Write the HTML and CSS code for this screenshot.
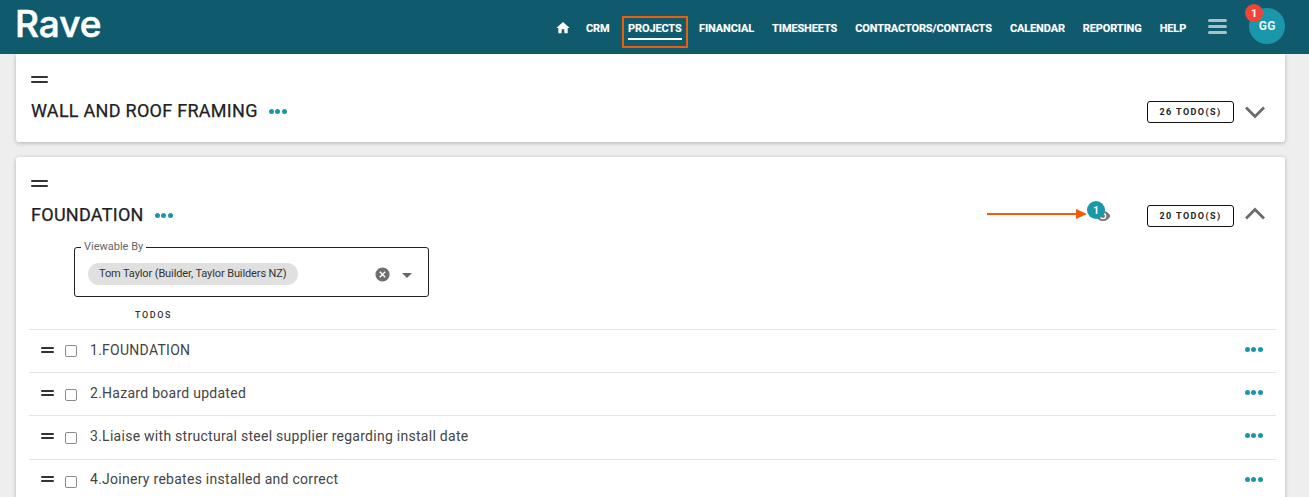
FILE: index.html
```html
<!DOCTYPE html>
<html lang="en">
<head>
<meta charset="utf-8">
<title>Rave</title>
<link rel="stylesheet" href="styles.css">
</head>
<body>
<header class="topbar">
  <div class="logo">Rave</div>
  <nav class="nav">
    <svg class="home" viewBox="0 0 24 24"><path d="M10 20v-6h4v6h5v-8h3L12 3 2 12h3v8z"/></svg>
    <a class="nav-item">CRM</a>
    <a class="nav-item active"><span>PROJECTS</span></a>
    <a class="nav-item">FINANCIAL</a>
    <a class="nav-item">TIMESHEETS</a>
    <a class="nav-item">CONTRACTORS/CONTACTS</a>
    <a class="nav-item">CALENDAR</a>
    <a class="nav-item">REPORTING</a>
    <a class="nav-item">HELP</a>
  </nav>
  <div class="burger"><i></i><i></i><i></i></div>
  <div class="avatar">GG<span class="avatar-badge">1</span></div>
</header>
<main class="content">
  <section class="card card-first">
    <div class="grip grip-card"><i></i><i></i></div>
    <div class="card-head">
      <h2>WALL AND ROOF FRAMING</h2>
      <div class="dots"><i></i><i></i><i></i></div>
      <div class="spacer"></div>
      <div class="todo-count">26 TODO(S)</div>
      <svg class="chev chev-down" viewBox="0 0 22 14"><path d="M2 2.5l9 9 9-9"/></svg>
    </div>
  </section>
  <section class="card card-second">
    <div class="grip grip-card"><i></i><i></i></div>
    <div class="card-head">
      <h2>FOUNDATION</h2>
      <div class="dots"><i></i><i></i><i></i></div>
      <div class="spacer"></div>
      <div class="viewers">
        <svg class="arrow" viewBox="0 0 100 10"><path d="M0 4h89V0l11 5-11 5V6H0z"/></svg>
        <svg class="eye" viewBox="0 0 24 24"><path d="M12 4.5C7 4.5 2.7 7.6 1 12c1.700 4.400 6 7.500 11 7.500s9.300-3.100 11-7.500c-1.700-4.400-6-7.500-11-7.500zM12 17a5 5 0 1 1 0-10 5 5 0 0 1 0 10zm0-8a3 3 0 1 0 0 6 3 3 0 0 0 0-6z"/></svg>
        <span class="viewer-badge">1</span>
      </div>
      <div class="todo-count">20 TODO(S)</div>
      <svg class="chev chev-up" viewBox="0 0 22 14"><path d="M2 11.500l9-9 9 9"/></svg>
    </div>
    <fieldset class="select">
      <legend>Viewable By</legend>
      <span class="chip">Tom Taylor (Builder, Taylor Builders NZ)</span>
      <div class="spacer"></div>
      <svg class="clear" viewBox="0 0 24 24"><path d="M12 2a10 10 0 1 0 0 20 10 10 0 0 0 0-20zm4.500 13.100L15.100 16.500 12 13.400 8.900 16.500 7.500 15.100 10.600 12 7.500 8.900 8.900 7.500 12 10.600 15.100 7.500 16.500 8.900 13.400 12z"/></svg>
      <span class="caret"></span>
    </fieldset>
    <div class="todos-label">TODOS</div>
    <ul class="todo-list">
      <li class="todo"><div class="grip"><i></i><i></i></div><span class="check check-first"></span><span class="todo-text">1.FOUNDATION</span><div class="dots"><i></i><i></i><i></i></div></li>
      <li class="todo"><div class="grip"><i></i><i></i></div><span class="check"></span><span class="todo-text">2.Hazard board updated</span><div class="dots"><i></i><i></i><i></i></div></li>
      <li class="todo"><div class="grip"><i></i><i></i></div><span class="check"></span><span class="todo-text">3.Liaise with structural steel supplier regarding install date</span><div class="dots"><i></i><i></i><i></i></div></li>
      <li class="todo"><div class="grip"><i></i><i></i></div><span class="check"></span><span class="todo-text">4.Joinery rebates installed and correct</span><div class="dots"><i></i><i></i><i></i></div></li>
    </ul>
  </section>
</main>
</body>
</html>
```
FILE: styles.css
```css
* { box-sizing: border-box; }
html, body { margin: 0; height: 497px; overflow: hidden; }
body { background: #eeeeee; font-family: Roboto, sans-serif; color: #212121; }

.topbar { height: 54px; background: #105a6e; display: flex; align-items: center; color: #fff; position: relative; z-index: 2; padding-left: 15px; }
.logo { font-family: Inter, sans-serif; font-weight: 500; font-size: 37px; letter-spacing: 0; -webkit-text-stroke: .6px #fff; line-height: 46px; margin-top: -7px; width: 540px; }
.nav { display: flex; align-items: flex-start; height: 32px; align-self: flex-start; margin-top: 16px; }
.home { width: 16px; height: 16px; fill: #fff; margin: 4px 9px 0 0; }
.nav-item { font-weight: 700; font-size: 11px; color: #fff; padding: 0 6px; margin-right: 6.050px; height: 32px; line-height: 25px; letter-spacing: -0.130px; text-shadow: 0 0 1px rgba(255,255,255,.35); }
.nav-item.active { border: 2px solid #f25c05; margin: 0 5px 0 0; padding: 0 4.500px; line-height: 21px; }
.nav-item.active span { display: block; height: 22px; border-bottom: 2px solid #fff; }
.burger { display: flex; flex-direction: column; gap: 3px; width: 19px; margin: -2px 0 0 10px; }
.burger i { display: block; height: 3px; background: #a9c2c9; border-radius: 2px; }
.avatar { position: relative; width: 36px; height: 36px; border-radius: 50%; background: #1a97ab; margin: -2px 0 0 22px; display: flex; align-items: center; justify-content: center; font-size: 12px; font-weight: 700; color: #e8f4f6; letter-spacing: .3px; }
.avatar-badge { position: absolute; left: -4px; top: -4px; width: 18px; height: 18px; border-radius: 50%; background: #f44336; color: #fff; font-size: 11px; font-weight: 700; display: flex; align-items: center; justify-content: center; }

.content { padding: 0 24px 0 16px; height: 443px; overflow: hidden; }
.card { background: #fff; border-radius: 3px; box-shadow: 0 1px 4px rgba(0,0,0,.25); padding: 0 9px 0 15px; }
.card-first { height: 88px; margin-bottom: 15px; padding-top: 22px; border-radius: 0 0 3px 3px; }
.card-second { height: 400px; padding-top: 23px; }

.grip { display: flex; flex-direction: column; gap: 2px; width: 16px; }
.grip i { display: block; height: 2px; background: #333; border-radius: 1px; }
.grip-card { height: 7px; gap: 2.500px; width: 17px; }
.grip-card i { height: 2.500px; }

.card-head { display: flex; align-items: center; height: 28px; margin-top: 14px; }
.card-head h2 { margin: 0; font-size: 18px; font-weight: 400; letter-spacing: .28px; -webkit-text-stroke: .25px #212121; color: #212121; line-height: 28px; }
.card-head .dots { margin-left: 11px; }
.spacer { flex: 1; }
.dots { display: flex; gap: 1.500px; }
.dots i { display: block; width: 5px; height: 5px; border-radius: 50%; background: #1a97ab; }

.todo-count { width: 87px; height: 22px; border: 1px solid #111; border-radius: 3px; font-size: 9px; font-weight: 700; letter-spacing: 1.400px; display: flex; align-items: center; justify-content: center; color: #222; margin-top: 2px; }
.chev { width: 22px; height: 14px; fill: none; stroke: #6b6b6b; stroke-width: 2.800px; margin: 0 10px 0 10px; }
.chev-down { margin-top: 2px; }
.chev-up { margin-bottom: 3px; }

.viewers { position: relative; width: 24px; height: 24px; margin-right: 36px; }
.eye { position: absolute; left: 8px; top: 4.500px; width: 16px; height: 16px; fill: #757575; }
.viewer-badge { position: absolute; left: 0; top: -2px; width: 18px; height: 18px; border-radius: 50%; background: #1a97ab; color: #fff; font-size: 10px; font-weight: 700; display: flex; align-items: center; justify-content: center; }
.arrow { position: absolute; left: -100px; top: 5.500px; width: 100px; height: 10px; fill: #f25c05; }

.select { display: flex; align-items: center; width: 355px; height: 56px; margin: 12px 0 0 43px; padding: 0 16px 1px 13px; border: 1px solid #222; border-radius: 3px; min-width: 0; }
.select legend { font-size: 11px; color: #666; padding: 0 3px; margin-left: -7px; line-height: 12px; }
.chip { height: 22px; background: #e0e0e0; border-radius: 11px; padding: 0 11px; font-size: 11px; letter-spacing: -0.110px; line-height: 21px; color: #333; white-space: nowrap; }
.clear { width: 17px; height: 17px; fill: #6e6e6e; margin-right: 11px; }
.caret { width: 0; height: 0; border-left: 5px solid transparent; border-right: 5px solid transparent; border-top: 5px solid #666; margin: 2px 0 0 0.500px; }

.todos-label { font-size: 9px; font-weight: 500; letter-spacing: 1.600px; color: #333; margin: 11px 0 0 104px; line-height: 14px; height: 21px; }
.todo-list { list-style: none; margin: 0 0 0 -2px; padding: 0; }
.todo { display: flex; align-items: center; height: 43.200px; border-top: 1px solid #e5e5e5; padding: 0 13.500px 0 12px; }
.todo .grip { width: 13px; margin-top: -3px; }
.check { width: 12px; height: 12px; border: 1.500px solid #8c8c8c; border-radius: 2px; margin: 2px 0 0 11px; }
.check-first { margin-top: 0; }
.todo-text { flex: 1; margin: -3px 0 0 13px; font-size: 14px; letter-spacing: .27px; color: #444; }
.todo .dots { margin-top: -3px; }
```
